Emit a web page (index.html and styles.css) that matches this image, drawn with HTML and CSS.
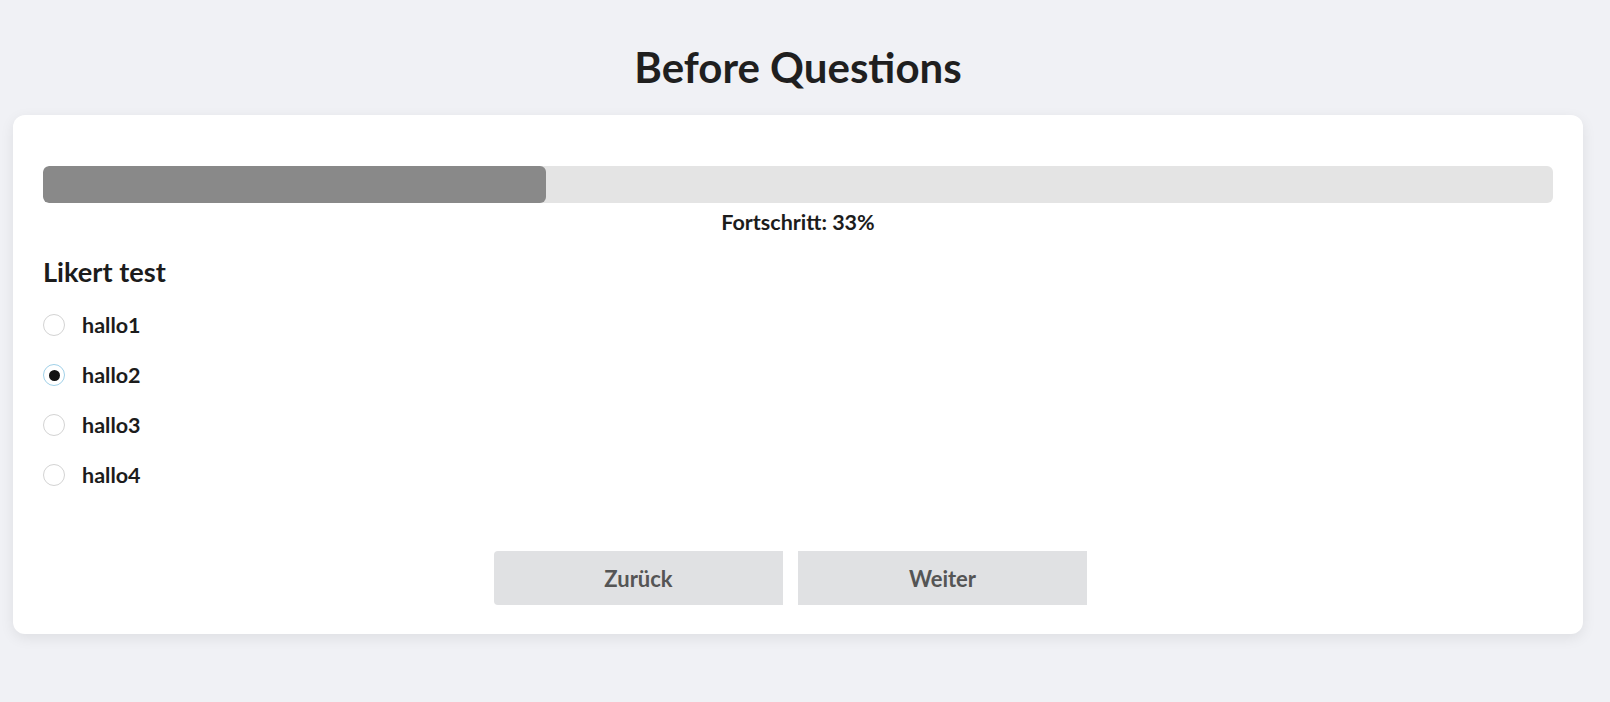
FILE: index.html
```html
<!DOCTYPE html>
<html lang="de">
<head>
<meta charset="utf-8">
<title>Before Questions</title>
<link rel="stylesheet" href="styles.css">
</head>
<body>
<div class="page">
  <h1 class="title">Before Questions</h1>
  <main class="card">
    <div class="progress">
      <div class="progress-fill" style="width:33.33%"></div>
    </div>
    <div class="progress-label">Fortschritt: 33%</div>
    <h2 class="question">Likert test</h2>
    <div class="options">
      <label class="option"><span class="radio"></span><span class="option-text">hallo1</span></label>
      <label class="option"><span class="radio checked"></span><span class="option-text">hallo2</span></label>
      <label class="option"><span class="radio"></span><span class="option-text">hallo3</span></label>
      <label class="option"><span class="radio"></span><span class="option-text">hallo4</span></label>
    </div>
    <div class="actions">
      <button class="btn btn-back">Zurück</button>
      <button class="btn btn-next">Weiter</button>
    </div>
  </main>
</div>
</body>
</html>
```
FILE: styles.css
```css
* { box-sizing: border-box; }
html, body { margin: 0; padding: 0; }
body {
  background: #f0f1f5;
  font-family: Lato, "Noto Sans", sans-serif;
  color: #212121;
}
.page {
  width: 1596px;
  padding: 0 13px 40px;
}
.title {
  margin: 42px 0 23px;
  font-size: 42px;
  line-height: 50px;
  font-weight: 700;
  text-align: center;
  color: #1f1f1f;
}
.card {
  background: #fff;
  border-radius: 12px;
  box-shadow: 0 4px 14px rgba(0, 0, 0, 0.08);
  padding: 51px 30px 29px;
}
.progress {
  height: 37px;
  background: #e4e4e4;
  border-radius: 6px;
  overflow: hidden;
}
.progress-fill {
  height: 100%;
  background: #898989;
  border-radius: 6px;
}
.progress-label {
  margin-top: 6px;
  text-align: center;
  font-size: 21.5px;
  line-height: 26px;
  font-weight: 700;
  color: #1c1c1c;
}
.question {
  margin: 21px 0 26px;
  font-size: 27.2px;
  line-height: 32px;
  font-weight: 700;
  color: #1c1c1c;
}
.options {
  display: flex;
  flex-direction: column;
  gap: 28px;
}
.option {
  display: flex;
  align-items: center;
  gap: 17px;
  height: 22px;
}
.radio {
  width: 22px;
  height: 22px;
  border-radius: 50%;
  border: 1px solid #d3d3d3;
  background: #fff;
  display: flex;
  align-items: center;
  justify-content: center;
  flex: none;
}
.radio.checked {
  border-color: #9fd0e8;
}
.radio.checked::after {
  content: "";
  width: 11px;
  height: 11px;
  border-radius: 50%;
  background: #111;
}
.option-text {
  font-size: 21.5px;
  font-weight: 700;
  color: #1c1c1c;
}
.actions {
  display: flex;
  justify-content: center;
  gap: 15px;
  margin-top: 65px;
  padding-right: 15px;
}
.btn {
  width: 289px;
  height: 54px;
  border: none;
  background: #e0e1e3;
  color: #555;
  font-family: Lato, "Noto Sans", sans-serif;
  font-size: 22px;
  font-weight: 700;
  padding: 0;
}
.btn-back { border-radius: 4px 0 0 4px; }
.btn-next { border-radius: 0; }
```
